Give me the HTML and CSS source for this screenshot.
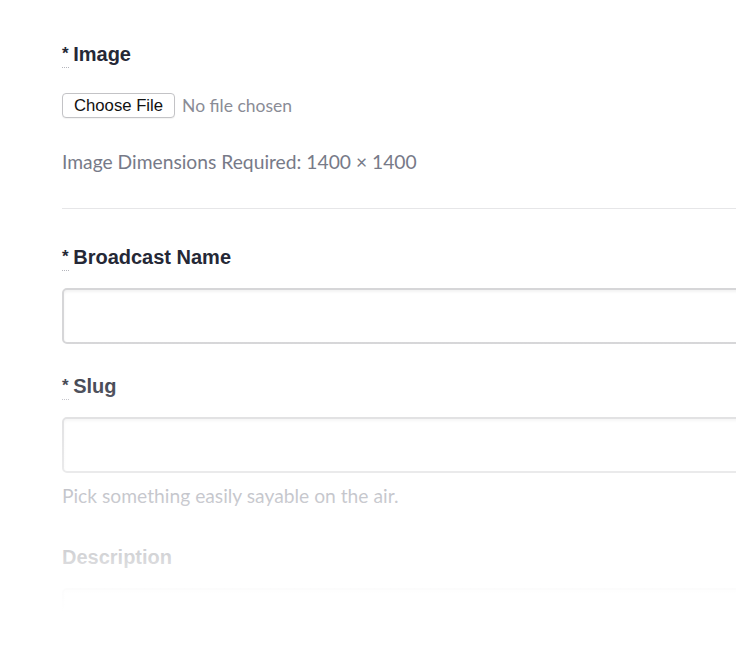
FILE: index.html
```html
<!DOCTYPE html>
<html>
<head>
<meta charset="utf-8">
<link rel="stylesheet" href="styles.css">
</head>
<body>
<div class="page">
  <form class="form">
    <div class="field">
      <label class="label"><abbr class="req" title="required">*</abbr> Image</label>
      <div class="file-row">
        <span class="file-btn">Choose File</span>
        <span class="file-none">No file chosen</span>
      </div>
      <p class="hint">Image Dimensions Required: 1400 × 1400</p>
    </div>
    <hr class="sep">
    <div class="field">
      <label class="label"><abbr class="req" title="required">*</abbr> Broadcast Name</label>
      <div class="input"></div>
    </div>
    <div class="field">
      <label class="label"><abbr class="req" title="required">*</abbr> Slug</label>
      <div class="input"></div>
      <p class="hint small">Pick something easily sayable on the air.</p>
    </div>
    <div class="field">
      <label class="label">Description</label>
      <div class="input tall"></div>
    </div>
  </form>
  <div class="fade"></div>
</div>
</body>
</html>
```
FILE: styles.css
```css
html, body {
  margin: 0;
  padding: 0;
  background: #fff;
  overflow: hidden;
}
.page {
  position: relative;
  width: 736px;
  height: 658px;
  overflow: hidden;
}
.form {
  width: 760px;
  padding: 40px 0 0 62px;
  display: flex;
  flex-direction: column;
  font-family: Lato, "Liberation Sans", sans-serif;
}
.field {
  display: flex;
  flex-direction: column;
}
.field + .field {
  margin-top: 28px;
}
.label {
  font-family: "Liberation Sans", Arial, sans-serif;
  font-weight: 700;
  font-size: 20px;
  line-height: 28px;
  height: 28px;
  color: #252836;
  display: block;
  white-space: nowrap;
}
.req {
  font-size: 17px;
  text-decoration: none;
  border-bottom: 1px dotted #b5b6bd;
  line-height: 14px;
  display: inline-block;
  padding-bottom: 6px;
  vertical-align: 2px;
  margin-right: -1px;
}
.file-row {
  margin-top: 25px;
  display: flex;
  align-items: center;
  gap: 7px;
  height: 25px;
}
.file-btn {
  font-family: "Liberation Sans", Arial, sans-serif;
  font-size: 16.7px;
  color: #111;
  border: 1px solid #c3c3c6;
  border-radius: 4px;
  background: #fff;
  height: 23px;
  line-height: 24px;
  padding: 0 11px 0 11px;
  box-shadow: 0 1px 1px rgba(0,0,0,0.05);
}
.file-none {
  font-family: Lato, "Liberation Sans", sans-serif;
  font-size: 17.5px;
  color: #8a8c96;
  line-height: 24px;
}
.hint {
  margin: 32px 0 0 0;
  font-size: 19.25px;
  line-height: 24px;
  color: #777a88;
}
.hint.small {
  margin-top: 11px;
  margin-bottom: 7px;
}
.sep {
  border: 0;
  border-top: 1px solid #e6e6e8;
  margin: 34px 0 34px 0;
  width: 700px;
}
.input {
  margin-top: 17px;
  height: 52px;
  border: 2px solid #d6d6d8;
  border-radius: 5px;
  box-shadow: inset 0 2px 3px rgba(0,0,0,0.05);
}
.input.tall {
  height: 120px;
}
.fade {
  position: absolute;
  left: 0;
  top: 0;
  width: 100%;
  height: 100%;
  background: linear-gradient(to bottom, rgba(255,255,255,0) 339px, rgba(255,255,255,0.97) 600px, #fff 612px);
  pointer-events: none;
}
```
